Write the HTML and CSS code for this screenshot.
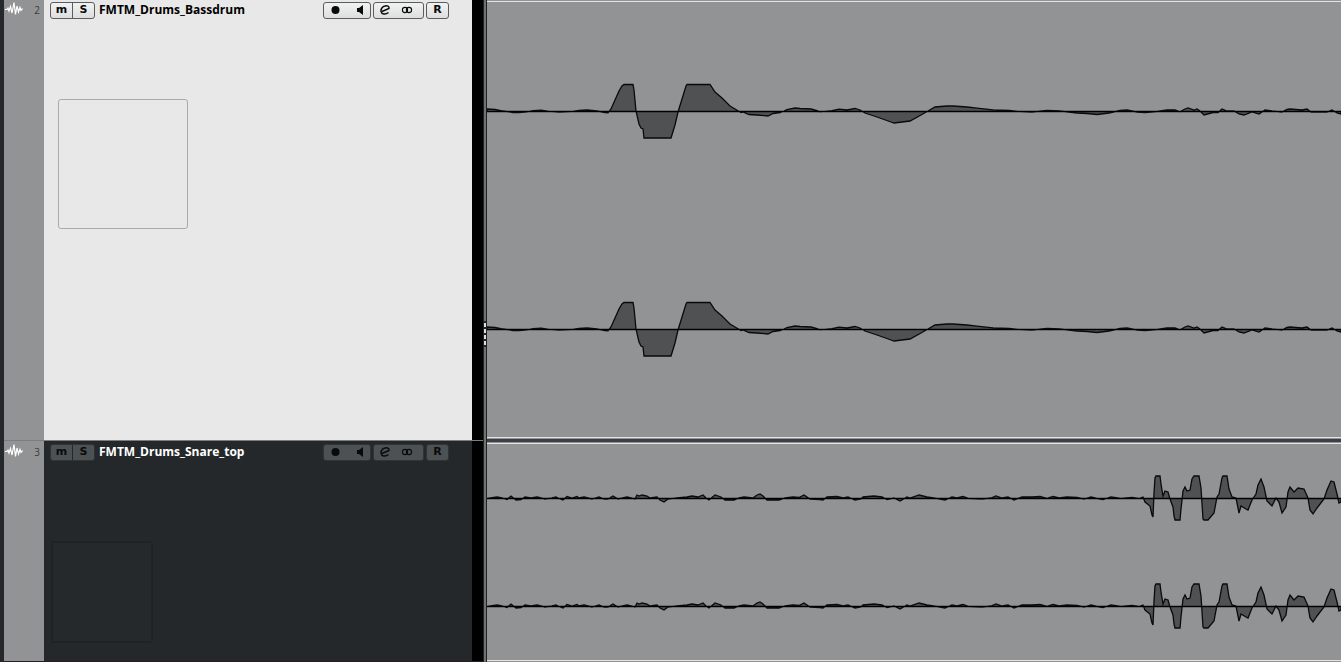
FILE: index.html
```
<!DOCTYPE html>
<html lang="en">
<head>
  <meta charset="UTF-8" />
  <meta name="viewport" content="width=device-width, initial-scale=1.0" />
  <title>Project</title>
  <link rel="stylesheet" href="styles.css">
</head>
<body>

  <!-- Shared icons and waveforms -->
  <svg class="defs" aria-hidden="true">
    <symbol id="icon-wave" viewBox="0 0 18 16">
      <path d="M0 8.500H2L3 7 4 10 5.500 5.500 7 12 9 1.500 10.500 13.500 12 5 13.500 11 15 6.500 16 9.500 17 8H18" fill="none" stroke="#fff" stroke-width="1.2" />
    </symbol>
    <symbol id="icon-record" viewBox="0 0 12 12">
      <circle cx="5.500" cy="6" r="4" />
    </symbol>
    <symbol id="icon-monitor" viewBox="0 0 12 12">
      <path d="M4 4h2l4-3v10L6 8H4z" />
    </symbol>
    <symbol id="icon-edit" viewBox="0 0 12 12">
      <path d="M3 7.500L10 4.500C10.500 2 8 1.500 6 2 3.500 2.500 1.500 5 2 7.500 2.500 10.500 6.500 11 9.500 8.500" fill="none" stroke="currentColor" stroke-width="1.5" />
    </symbol>
    <symbol id="icon-stereo" viewBox="0 0 12 12">
      <circle cx="4" cy="6" r="2.6" fill="none" stroke="currentColor" stroke-width="1.1" />
      <circle cx="8" cy="6" r="2.6" fill="none" stroke="currentColor" stroke-width="1.1" />
    </symbol>
    <symbol id="wave-bassdrum" viewBox="0 -109 854 218" preserveAspectRatio="none">
      <path class="shape" d="M0 .5L0-2 8-1.500 14-.3 20 .5 26 1.500 32 1.700 40 .8 46-.3 54-.8 62 .3 72 1 84 .7 92-.5 100-1 110 0 118 1.500 121 1.800 124-2 132-20 135-25 137-26.500 146-26.500 147-21 149 0 152 13 154 17 156 18 157 27 184 27 188 14 191 1 199-25 200-26.500 223-26.500 228-19 235-13 243-5 248-2 254 1.500 256 1 262 3.500 270 4 281 5 286 2.500 293 1.500 297 0 300-1.500 308-3 313-2.500 324-2 330-.3 333 .8 345-.3 352-1.800 360-1 368-2.500 373-1 378 2 390 6 404 11 407 12 423 10 434 4 441 0 448-4 460-5 466-5 480-4 490-2.800 506-1.200 522-.5 533 .7 545 1 560-.5 573 0 590 2 600 2.500 610 3.500 622 2 633-.5 640-1 650 1 658 1.500 670 .5 680-1 688-1 693 .8 698-2 701-3 707-1 710-2 713 0 717 4 726 1.500 731 1.500 735-2 740 0 747 0 752 3 757 4 765 1 772 3 778-1 785 0 795 1 800-1.500 803-2 815-1 820-2 824 1 840 1 845-1 850 2 854 3V.5z" />
      <path class="zero" d="M0 .5H854" />
    </symbol>
    <symbol id="wave-snare" viewBox="0 -54 854 108" preserveAspectRatio="none">
      <path class="shape" d="M0 .5L10-1 15 0 20 1.500 24-2 29 2 34 1.500 38-1 44 0 50-1 58 1 65 0 69-1 72 .5 76 2 80-1.500 85 0 90-1.500 92 0 97-1 105 1 112-1 117 1 121 1 126-2 131 1 140-1 148 1 150-3 152-2 155-3 160-2 163 0 170-1 173 2 177 4 181 1 190 0 200-1 205-2 211-1 216-3 219 0 222 2 228-3 234-1 238 2 247 2 252 0 257-1 266 0 270-3 273-4 276-2 280 2 292 2 298 0 306-1 312-.5 317-3 323 1 333 1.500 336 2 340-1 350-1.500 356 0 361-1 368 2 374 1 376-1 387-2 395-1 400 1.500 407 0 413 3 420-1 423 0 432-3 440-1 450 .5 458 2 465-1 470 0 476-1.500 482 .5 495 1 504 0 509-2 515 0 521-1 527 2 535-1 545-1 553-1.500 560 .3 566-1.500 572 0 580-1 590-.5 597 1 604-1 610 .5 616 1.500 624-1 634 .5 645-.5 652 .5 656-1 658 4 663 8 665 17 666 19 667-5 668-20 669-22 673-22 674-14 676-2 678-7 681-6 683 1 686 9 687 18 688 22 693 22 694 11 696-7 698-11 700-7 703-8 705-19 707-22 712-22 714-10 716 21 717 22 721 22 727 15 730-1 732-4 735-20 736-22 740-22 742-9 745-1 749 0 751 10 752 15 754 8 759 11 761 12 765 2 769-4 771-13 774-19 777-11 780 3 785 8 789 0 792 4 795 15 799 9 801-6 803-11 807-6 811-10 817-9 821 0 823 12 826 16 830 10 837 1 840-8 844-17 847-16 850-4 852 5 854 4V.5z" />
      <path class="zero" d="M0 .5H854" />
    </symbol>
  </svg>

  <div class="project">

    <section class="track-list" aria-label="Track list">
      <article class="track light">
        <div class="gutter">
          <svg class="track-icon"><use href="#icon-wave" /></svg>
          <span class="number">2</span>
        </div>
        <div class="panel">
          <div class="controls">
            <div class="group">
              <button type="button" aria-label="Mute">m</button>
              <button type="button" aria-label="Solo" class="split">S</button>
            </div>
            <h2>FMTM_Drums_Bassdrum</h2>
            <div class="group wide">
              <button type="button" aria-label="Record enable"><svg><use href="#icon-record" /></svg></button>
              <button type="button" aria-label="Monitor"><svg><use href="#icon-monitor" /></svg></button>
            </div>
            <div class="group channel">
              <button type="button" aria-label="Edit channel"><svg><use href="#icon-edit" /></svg></button>
              <button type="button" aria-label="Stereo"><svg><use href="#icon-stereo" /></svg></button>
            </div>
            <div class="group">
              <button type="button" aria-label="Read automation">R</button>
            </div>
          </div>
          <div class="picture"></div>
        </div>
      </article>

      <article class="track dark">
        <div class="gutter">
          <svg class="track-icon"><use href="#icon-wave" /></svg>
          <span class="number">3</span>
        </div>
        <div class="panel">
          <div class="controls">
            <div class="group">
              <button type="button" aria-label="Mute">m</button>
              <button type="button" aria-label="Solo" class="split">S</button>
            </div>
            <h2>FMTM_Drums_Snare_top</h2>
            <div class="group wide">
              <button type="button" aria-label="Record enable"><svg><use href="#icon-record" /></svg></button>
              <button type="button" aria-label="Monitor"><svg><use href="#icon-monitor" /></svg></button>
            </div>
            <div class="group channel">
              <button type="button" aria-label="Edit channel"><svg><use href="#icon-edit" /></svg></button>
              <button type="button" aria-label="Stereo"><svg><use href="#icon-stereo" /></svg></button>
            </div>
            <div class="group">
              <button type="button" aria-label="Read automation">R</button>
            </div>
          </div>
          <div class="picture"></div>
        </div>
      </article>
    </section>

    <div class="divider">
      <div class="grip"><i></i><i></i><i></i><i></i></div>
    </div>

    <main class="events">
      <div class="event bassdrum">
        <svg><use href="#wave-bassdrum" /></svg>
        <svg><use href="#wave-bassdrum" /></svg>
      </div>
      <div class="event snare">
        <svg><use href="#wave-snare" /></svg>
        <svg><use href="#wave-snare" /></svg>
      </div>
    </main>

  </div>

</body>
</html>
```
FILE: styles.css
```
* {
  box-sizing: border-box;
}

body {
  margin: 0;
  background: #24282b;
  font-family: "Open Sans", "Noto Sans", sans-serif;
}

.defs {
  display: none;
}

.project {
  display: grid;
  grid-template-columns: 483px 4px 1fr;
  height: 100vh;
  overflow: hidden;
}

/* Track list */
.track-list {
  display: grid;
  grid-template-rows: 441px 1fr;
  border-left: 4px solid #24282b;
  background: #000;
}

.track {
  display: grid;
  grid-template-columns: 40px 428px;
}

.track.light {
  border-bottom: 1px solid #7b7d7e;
}

.track.dark {
  border-bottom: 1px solid #2a1c22;
}

.gutter {
  display: flex;
  align-items: flex-start;
  justify-content: space-between;
  padding: 1px 4px 0 1px;
  background: #929395;
}

.dark .gutter {
  padding-top: 2px;
}

.track-icon {
  width: 18px;
  height: 16px;
}

.number {
  font-size: 10px;
  line-height: 18px;
  color: #3c3d3f;
}

.light .panel {
  background: #e8e8e8;
  color: #000;
}

.dark .panel {
  background: #24282b;
  color: #fff;
}

.controls {
  display: flex;
  align-items: center;
  gap: 2px;
  padding: 1px 23px 0 6px;
}

.dark .controls {
  padding-top: 2px;
}

.controls h2 {
  flex: 1;
  margin: 0 0 0 2px;
  font-size: 12px;
  font-weight: 700;
  line-height: 18px;
}

.group {
  display: flex;
  height: 17px;
  border: 1px solid #5c5c5c;
  border-radius: 3px;
  background: linear-gradient(#f2f2f2, #dcdedf);
}

.group.channel {
  padding-right: 5px;
}

.dark .group {
  border-color: #303437;
  background: #4c5154;
}

.group button {
  display: flex;
  align-items: center;
  justify-content: center;
  width: 21px;
  padding: 0;
  border: 0;
  background: none;
  color: #0a0a0a;
  font: bold 11px/14px "DejaVu Sans", sans-serif;
}

.group.wide button {
  width: 23px;
}

.group.channel button {
  width: 22px;
}

.group button.split {
  width: 22px;
  border-left: 1px solid #5c5c5c;
}

.dark .group button.split {
  border-color: #24282b;
}

.group button svg {
  width: 12px;
  height: 12px;
  fill: currentColor;
}

.picture {
  border-radius: 3px;
}

.light .picture {
  width: 130px;
  height: 130px;
  margin: 80px 0 0 14px;
  border: 1px solid #aaa;
}

.dark .picture {
  width: 102px;
  height: 102px;
  margin: 80px 0 0 7px;
  border: 2px solid #202326;
  background: #26292c;
}

/* Divider between list and events */
.divider {
  display: flex;
  align-items: center;
  padding-top: 6px;
  border: solid #222;
  border-width: 0 1px;
  background: #707173;
}

.grip {
  display: grid;
  gap: 2px;
  padding: 2px 0;
  background: #222;
}

.grip i {
  width: 2px;
  height: 4px;
  background: #ddd;
}

/* Audio events */
.events {
  display: grid;
  grid-template-rows: 437px 1fr;
  gap: 5px;
  min-width: 0;
  padding: 1px 0;
  background: linear-gradient(#3c4046, #3c4046) 0 439px / 100% 3px no-repeat #929395;
}

.event {
  overflow: hidden;
  border: solid #e4e4e4;
  border-width: 1px 0;
  background: #929395;
}

.event svg {
  display: block;
  width: 100%;
}

.bassdrum svg {
  height: 218px;
}

.snare svg {
  height: 108px;
}

.shape {
  fill: #505153;
  stroke: #0a0a0a;
  stroke-width: 1.3;
  vector-effect: non-scaling-stroke;
}

.zero {
  stroke: #000;
  stroke-width: 1;
  vector-effect: non-scaling-stroke;
}
```
